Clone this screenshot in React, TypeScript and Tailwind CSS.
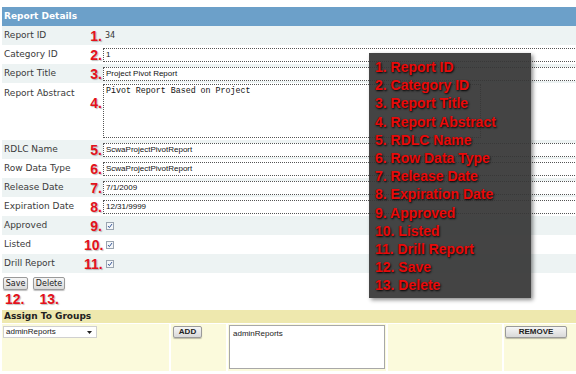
import { ReactNode } from "react";

type Row = {
  label: string;
  num: string;
  kind: "text" | "input" | "area" | "check";
  value?: string;
};

const rows: Row[] = [
  { label: "Report ID", num: "1.", kind: "text", value: "34" },
  { label: "Category ID", num: "2.", kind: "input", value: "1" },
  { label: "Report Title", num: "3.", kind: "input", value: "Project Pivot Report" },
  { label: "Report Abstract", num: "4.", kind: "area", value: "Pivot Report Based on Project" },
  { label: "RDLC Name", num: "5.", kind: "input", value: "ScwaProjectPivotReport" },
  { label: "Row Data Type", num: "6.", kind: "input", value: "ScwaProjectPivotReport" },
  { label: "Release Date", num: "7.", kind: "input", value: "7/1/2009" },
  { label: "Expiration Date", num: "8.", kind: "input", value: "12/31/9999" },
  { label: "Approved", num: "9.", kind: "check" },
  { label: "Listed", num: "10.", kind: "check" },
  { label: "Drill Report", num: "11.", kind: "check" },
];

const legend = [
  "1. Report ID",
  "2. Category ID",
  "3. Report Title",
  "4. Report Abstract",
  "5. RDLC Name",
  "6. Row Data Type",
  "7. Release Date",
  "8. Expiration Date",
  "9. Approved",
  "10. Listed",
  "11. Drill Report",
  "12. Save",
  "13. Delete",
];

function Num({ children }: { children: ReactNode }) {
  return (
    <span className="font-['Liberation_Sans',Arial,sans-serif] font-bold text-[14px] leading-none text-[#e3111b] [text-shadow:1px_1px_1px_rgba(0,0,0,0.25)]">
      {children}
    </span>
  );
}

function Check() {
  return (
    <span className="ml-[3px] flex h-[8px] w-[8px] items-center justify-center border border-[#9aa4b0] bg-[#f4f6f8]">
      <svg width="6" height="6" viewBox="0 0 6 6">
        <path d="M1 3 L2.4 4.6 L5 1" fill="none" stroke="#3a5a9a" strokeWidth="1" />
      </svg>
    </span>
  );
}

function GreyButton({ children, className }: { children: ReactNode; className?: string }) {
  return (
    <button
      className={`flex items-center justify-center rounded-[2px] border border-[#9a9a9a] bg-gradient-to-b from-[#f6f6f6] to-[#d9d9d9] text-[#222] shadow-[0_1px_1px_rgba(0,0,0,0.25)] ${className ?? ""}`}
    >
      {children}
    </button>
  );
}

export default function App() {
  return (
    <div className="relative h-[374px] w-[576px] overflow-hidden bg-white pl-[2px] pt-[7px] font-['DejaVu_Sans',Verdana,sans-serif]">
      {/* Report details header */}
      <div className="flex h-[19px] items-center bg-[#6ca0c9] pl-[2px] text-[9px] font-bold text-white">
        Report Details
      </div>

      {/* Field rows */}
      <div className="flex flex-col">
        {rows.map((r, i) => (
          <div
            key={r.label}
            className={`flex ${r.kind === "area" ? "h-[57px] items-start" : "h-[19px] items-center"} ${i % 2 === 0 ? "bg-[#edf3f3]" : "bg-white"}`}
          >
            <div
              className={`w-[82px] shrink-0 pl-[2px] text-[9px] text-[#3a3a3a] ${r.kind === "area" ? "pt-[4px]" : ""}`}
            >
              {r.label}
            </div>
            <div className={`w-[18px] shrink-0 text-right ${r.kind === "area" ? "pt-[8px]" : ""}`}>
              <Num>{r.num}</Num>
            </div>
            <div className="ml-[1px] flex items-center">
              {r.kind === "text" && (
                <span className="pl-[2px] text-[8px] text-[#333]">{r.value}</span>
              )}
              {r.kind === "input" && (
                <div className="flex h-[14px] w-[490px] items-center border border-dotted border-[#555] bg-white pl-[2px] font-['Liberation_Sans',Arial,sans-serif] text-[8px] text-[#111]">
                  {r.value}
                </div>
              )}
              {r.kind === "area" && (
                <div className="mt-[1px] h-[54px] w-[378px] border border-dotted border-[#555] bg-white pl-[2px] pt-[2px] font-['Liberation_Mono','Courier_New',monospace] text-[8.3px] leading-none text-[#111]">
                  {r.value}
                </div>
              )}
              {r.kind === "check" && <Check />}
            </div>
          </div>
        ))}
      </div>

      {/* Save / Delete */}
      <div className="mt-[4px] flex gap-[5px] pl-[1px]">
        <GreyButton className="h-[13px] w-[25px] text-[8px]">Save</GreyButton>
        <GreyButton className="h-[13px] w-[32px] text-[8px]">Delete</GreyButton>
      </div>
      <div className="mt-[2px] flex h-[14px] items-center gap-[15px] pl-[3px]">
        <Num>12.</Num>
        <Num>13.</Num>
      </div>

      {/* Assign to groups */}
      <div className="mt-[4px] flex h-[13px] items-center bg-[#eee8ae] pl-[2px] pr-0 text-[9px] font-bold text-[#222]">
        Assign To Groups
      </div>
      <div className="mt-[1px] flex h-[47px] gap-[2px]">
        <div className="w-[167px] bg-[#fbfadc] pl-[1px] pt-[2px]">
          <div className="flex h-[12px] w-[94px] items-center justify-between border border-[#d0d0d0] bg-white pl-[2px] pr-[4px] font-['Liberation_Sans',Arial,sans-serif] text-[8px] text-[#222]">
            adminReports
            <svg width="5" height="3" viewBox="0 0 5 3">
              <path d="M0 0 L5 0 L2.5 3 Z" fill="#222" />
            </svg>
          </div>
        </div>
        <div className="w-[55px] bg-[#fbfadc] pl-[2px] pt-[2px]">
          <GreyButton className="h-[12px] w-[29px] font-['Liberation_Sans',Arial,sans-serif] text-[8px] font-bold">
            ADD
          </GreyButton>
        </div>
        <div className="w-[158px] bg-[#fbfadc] pl-[1px] pt-[1px]">
          <div className="h-[44px] w-[156px] border border-[#a8a8a8] bg-white pl-[3px] pt-[2px] font-['Liberation_Sans',Arial,sans-serif] text-[8px] text-[#222]">
            adminReports
          </div>
        </div>
        <div className="w-[114px] bg-[#fbfadc]" />
        <div className="flex-1 bg-[#fbfadc] pl-[1px] pt-[2px]">
          <GreyButton className="h-[12px] w-[62px] font-['Liberation_Sans',Arial,sans-serif] text-[8px] font-bold">
            REMOVE
          </GreyButton>
        </div>
      </div>

      {/* Legend overlay */}
      <div className="absolute left-[369px] top-[53px] h-[245px] w-[162px] bg-[#363636]/[0.93] pl-[6px] pt-[5px] shadow-[2px_2px_4px_rgba(0,0,0,0.45)]">
        {legend.map((t) => (
          <div
            key={t}
            className="h-[18.2px] whitespace-nowrap font-['Liberation_Sans',Arial,sans-serif] text-[14px] font-bold leading-[18.2px] text-[#e80a0a] [text-shadow:1px_1px_2px_#000]"
          >
            {t}
          </div>
        ))}
      </div>
    </div>
  );
}
